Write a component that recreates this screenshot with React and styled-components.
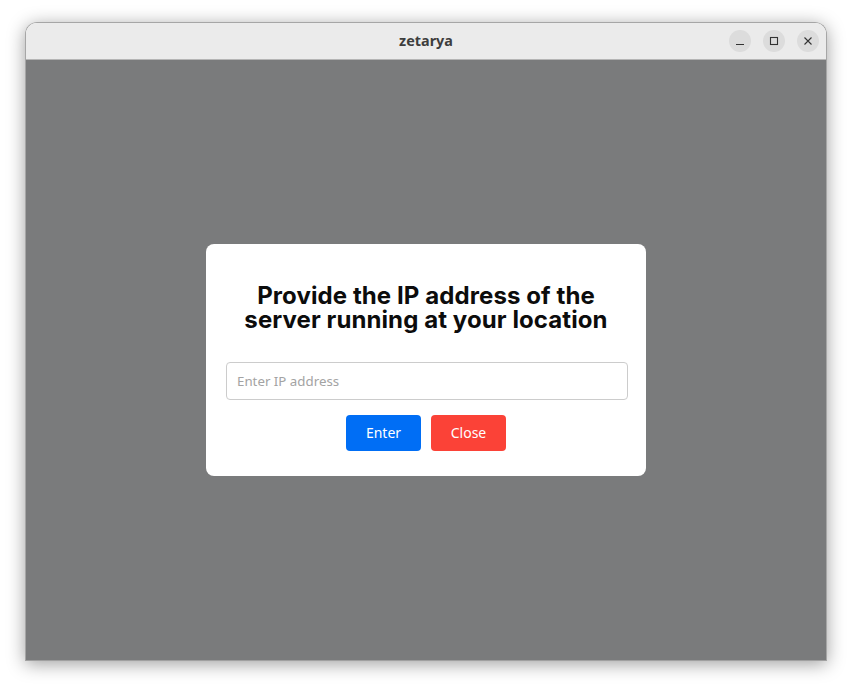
import React from "react";
import styled, { createGlobalStyle } from "styled-components";

const GlobalStyle = createGlobalStyle`
  html, body {
    margin: 0;
    height: 100%;
    background: #ffffff;
  }
  * { box-sizing: border-box; }
`;

const Page = styled.div`
  width: 852px;
  height: 689px;
  padding: 22px 25px 28px 25px;
  overflow: hidden;
`;

const Window = styled.div`
  width: 802px;
  height: 639px;
  display: flex;
  flex-direction: column;
  border: 1px solid #a6a6a6;
  border-bottom-color: #a0a0a0;
  border-radius: 12px 12px 0 0;
  box-shadow: 0 3px 18px rgba(0, 0, 0, 0.38);
  overflow: hidden;
`;

const TitleBar = styled.div`
  position: relative;
  flex: 0 0 37px;
  padding-bottom: 2px;
  display: flex;
  align-items: center;
  justify-content: center;
  background: #ebebeb;
  border-bottom: 1px solid #b5b5b5;
`;

const WindowTitle = styled.span`
  font: 700 14.4px "Noto Sans", sans-serif;
  color: #3d3d3d;
`;

const Controls = styled.div`
  position: absolute;
  right: 7px;
  top: 7px;
  display: flex;
  gap: 12px;
`;

const ControlButton = styled.div`
  width: 22px;
  height: 22px;
  border-radius: 50%;
  background: #dcdcdc;
  display: flex;
  align-items: center;
  justify-content: center;
`;

const Backdrop = styled.div`
  flex: 1;
  display: flex;
  align-items: center;
  justify-content: center;
  background: #7a7b7c;
`;

const Modal = styled.div`
  width: 440px;
  height: 232px;
  padding: 40px 18px 0 20px;
  background: #ffffff;
  border-radius: 8px;
  display: flex;
  flex-direction: column;
  align-items: center;
`;

const Heading = styled.h2`
  margin: 0 0 30px -2px;
  font: 700 24px/24px Inter, sans-serif;
  letter-spacing: 0.09px;
  color: #0c0c0c;
  text-align: center;
  white-space: nowrap;
`;

const IpInput = styled.input`
  width: 100%;
  height: 38px;
  padding: 0 10px 1px;
  margin-bottom: 15px;
  font: 13.3px "Noto Sans", sans-serif;
  border: 1px solid #cccccc;
  border-radius: 4px;
  outline: none;

  &::placeholder {
    color: #a3a3a3;
  }
`;

const Actions = styled.div`
  display: flex;
  gap: 10px;
  margin-left: -2px;
`;

const ActionButton = styled.button`
  width: 75px;
  height: 36px;
  padding: 0 0 2px;
  border: none;
  border-radius: 4px;
  font: 14px "Noto Sans", sans-serif;
  color: #ffffff;
  background: ${(p) => p.$color};
  cursor: pointer;
`;

const ControlIcon = ({ children }) => (
  <svg width="16" height="16" viewBox="0 0 16 16" fill="none" stroke="#333333" strokeWidth="1.1">
    {children}
  </svg>
);

export default function App() {
  return (
    <Page>
      <GlobalStyle />
      <Window>
        <TitleBar>
          <WindowTitle>zetarya</WindowTitle>
          <Controls>
            <ControlButton>
              <ControlIcon>
                <path d="M4 11.5h8" />
              </ControlIcon>
            </ControlButton>
            <ControlButton>
              <ControlIcon>
                <rect x="4.5" y="4.5" width="7" height="7" />
              </ControlIcon>
            </ControlButton>
            <ControlButton>
              <ControlIcon>
                <path d="M4.5 4.5l7 7M11.5 4.5l-7 7" />
              </ControlIcon>
            </ControlButton>
          </Controls>
        </TitleBar>
        <Backdrop>
          <Modal>
            <Heading>
              Provide the IP address of the
              <br />
              server running at your location
            </Heading>
            <IpInput placeholder="Enter IP address" />
            <Actions>
              <ActionButton $color="#006ef5">Enter</ActionButton>
              <ActionButton $color="#fb4237">Close</ActionButton>
            </Actions>
          </Modal>
        </Backdrop>
      </Window>
    </Page>
  );
}
